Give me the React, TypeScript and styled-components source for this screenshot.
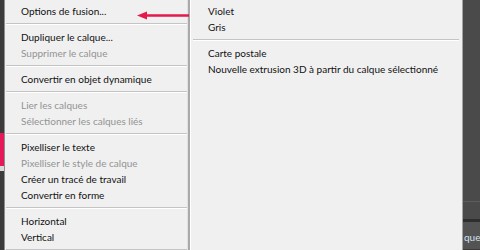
import styled, { createGlobalStyle } from "styled-components";

const GlobalStyle = createGlobalStyle`
  html, body {
    margin: 0;
    padding: 0;
    background: #4b4b4b;
  }
`;

const Screen = styled.div`
  position: relative;
  display: flex;
  width: 480px;
  height: 250px;
  overflow: hidden;
  font-family: Lato, "Open Sans", "Liberation Sans", sans-serif;
  font-size: 10px;
  background: #4b4b4b;
`;

const EdgeStrip = styled.div`
  flex: none;
  width: 4px;
  display: flex;
  flex-direction: column;
  border-right: 1px solid #8e8e8e;
`;

const EdgeSegment = styled.div<{ $h?: number; $color: string }>`
  flex: ${(p) => (p.$h ? `0 0 ${p.$h}px` : "1")};
  background: ${(p) => p.$color};
`;

const Menu = styled.ul<{ $width: number; $sepLeft: number; $sepRight: number; $pad: number }>`
  flex: none;
  width: ${(p) => p.$width}px;
  margin: 0;
  padding: 3px 0 0;
  list-style: none;
  background: #f0f0f0;

  .sep {
    height: 0;
    margin: 4px ${(p) => p.$sepRight}px 4px ${(p) => p.$sepLeft}px;
    border-top: 1px solid #c4c4c4;
    border-bottom: 1px solid #ffffff;
  }

  .item {
    padding-left: ${(p) => p.$pad}px;
  }
`;

const LeftMenu = styled(Menu)`
  border-right: 2px solid #a9a9a9;
  box-shadow: inset -1px 0 0 #e2e2e2;
`;

const SubMenu = styled(Menu)`
  border-left: 1px solid #ffffff;
  border-right: 1px solid #a3a3a3;
  box-shadow: 1px 0 0 #3e3e3e;
`;

const Item = styled.li<{ $disabled?: boolean }>`
  height: 16px;
  line-height: 16px;
  white-space: nowrap;
  color: ${(p) => (p.$disabled ? "#939393" : "#111111")};
`;

const Separator = styled.li``;

const Panel = styled.div`
  flex: 1;
  display: flex;
  flex-direction: column;
  background: #4a4a4a;
`;

const PanelBlock = styled.div<{ $h: number; $color: string }>`
  flex: 0 0 ${(p) => p.$h}px;
  background: ${(p) => p.$color};
`;

const PanelRow = styled.div`
  flex: 1;
  background: #535353;
  border-bottom: 1px solid #3a3a3a;
  padding: 9px 0 0 1px;
  color: #d6e2f2;
  font-size: 10px;
  white-space: nowrap;
  overflow: hidden;
`;

const Arrow = styled.svg`
  position: absolute;
  left: 137px;
  top: 10px;
`;

type Entry = { label?: string; disabled?: boolean };

const mainItems: Entry[] = [
  { label: "Options de fusion..." },
  {},
  { label: "Dupliquer le calque..." },
  { label: "Supprimer le calque", disabled: true },
  {},
  { label: "Convertir en objet dynamique" },
  {},
  { label: "Lier les calques", disabled: true },
  { label: "Sélectionner les calques liés", disabled: true },
  {},
  { label: "Pixelliser le texte" },
  { label: "Pixelliser le style de calque", disabled: true },
  { label: "Créer un tracé de travail" },
  { label: "Convertir en forme" },
  {},
  { label: "Horizontal" },
  { label: "Vertical" },
  {},
];

const subItems: Entry[] = [
  { label: "Violet" },
  { label: "Gris" },
  {},
  { label: "Carte postale" },
  { label: "Nouvelle extrusion 3D à partir du calque sélectionné" },
];

const renderEntries = (entries: Entry[]) =>
  entries.map((e, i) =>
    e.label ? (
      <Item key={i} className="item" $disabled={e.disabled}>
        {e.label}
      </Item>
    ) : (
      <Separator key={i} className="sep" />
    )
  );

export default function App() {
  return (
    <>
      <GlobalStyle />
      <Screen>
        <EdgeStrip>
          <EdgeSegment $h={133} $color="#3b3b3b" />
          <EdgeSegment $h={33} $color="#e5195a" />
          <EdgeSegment $h={5} $color="#d9d9d9" />
          <EdgeSegment $color="#3b3b3b" />
        </EdgeStrip>

        <LeftMenu $width={183} $sepLeft={1} $sepRight={1} $pad={16}>
          {renderEntries(mainItems)}
        </LeftMenu>

        <SubMenu $width={271} $sepLeft={2} $sepRight={3} $pad={17}>
          {renderEntries(subItems)}
        </SubMenu>

        <Panel>
          <PanelBlock $h={201} $color="#4a4a4a" />
          <PanelBlock $h={1} $color="#5d5d5d" />
          <PanelBlock $h={17} $color="#4a4a4a" />
          <PanelBlock $h={3} $color="#2e2e2e" />
          <PanelRow>que</PanelRow>
        </Panel>

        <Arrow width="52" height="11" viewBox="0 0 52 11">
          <line x1="8" y1="5.5" x2="52" y2="5.5" stroke="#e6194b" strokeWidth="2.5" />
          <polygon points="0,5.5 10,1.5 10,9.5" fill="#e6194b" />
        </Arrow>
      </Screen>
    </>
  );
}
